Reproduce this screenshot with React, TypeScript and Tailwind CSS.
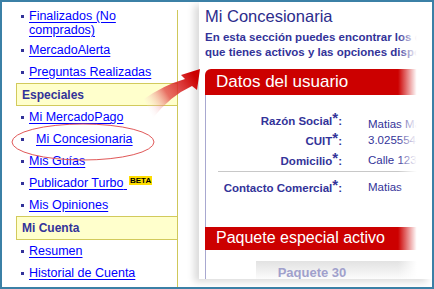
import React from 'react';

const font = "font-['Liberation_Sans',Arial,sans-serif]";

const Bullet = ({ className = '' }: { className?: string }) => (
  <span className={`w-[3px] h-[3px] bg-[#333399] shrink-0 ${className}`} />
);

const Item = ({ label, gap = 'ml-[5px]', beta }: { label: string; gap?: string; beta?: boolean }) => (
  <div className="h-[22px] flex items-center pl-[19px]">
    <Bullet />
    <a className={`${gap} text-[12.5px] leading-[14px] text-[#0000ff] underline underline-offset-2 whitespace-nowrap`}>
      {label}
      {beta && '\u00a0'}
    </a>
    {beta && (
      <span className="ml-[2px] -mt-[6px] bg-[#ffdd00] text-black font-bold text-[8px] leading-[9px] px-[1px]">BETA</span>
    )}
  </div>
);

const Header = ({ label, h }: { label: string; h: string }) => (
  <div className={`${h} ml-[14px] border border-r-0 border-[#d2ca5c] bg-[#ffffcc] flex items-center pl-[5px] text-[12px] font-bold text-[#333399]`}>
    {label}
  </div>
);

const Field = ({ label, value, first }: { label: string; value: string; first?: boolean }) => (
  <div className="flex h-[20px] items-center">
    <div className="w-[136px] text-right text-[11.5px] font-bold text-[#333399] whitespace-nowrap">
      {label}
      <span className="text-[15px] leading-none align-[2px]">*</span>:
    </div>
    <div className={`pl-[26px] text-[11.5px] text-[#333399] whitespace-nowrap ${first ? 'pt-[9px]' : ''}`}>{value}</div>
  </div>
);

export default function App() {
  return (
    <div className={`relative w-[434px] h-[289px] border-2 border-[#3b80a6] bg-white flex overflow-hidden ${font}`}>
      {/* sidebar */}
      <div className="w-[176px] shrink-0 flex flex-col">
        <div className="mt-[8px] flex-1 border-r border-[#cfc85a] flex flex-col">
          <div className="-mt-px h-[30px] flex items-start pl-[19px]">
            <Bullet className="mt-[6px]" />
            <a className="ml-[5px] text-[12.5px] leading-[14px] text-[#0000ff] underline underline-offset-2">
              Finalizados (No
              <br />
              comprados)
            </a>
          </div>
          <Item label="MercadoAlerta" />
          <Item label="Preguntas Realizadas" />
          <Header label="Especiales" h="h-[23px]" />
          <Item label="Mi MercadoPago" />
          <Item label="Mi Concesionaria" gap="ml-[12px]" />
          <Item label="Mis Guías" />
          <Item label="Publicador Turbo" beta />
          <Item label="Mis Opiniones" />
          <Header label="Mi Cuenta" h="h-[24px]" />
          <Item label="Resumen" />
          <Item label="Historial de Cuenta" />
        </div>
      </div>

      {/* main panel */}
      <div className="flex-1 flex flex-col pl-[21px] pb-[8px] min-w-0">
        <div className="relative flex-1 bg-white shadow-[-5px_3px_7px_rgba(0,0,0,0.14)] pl-[6px] flex flex-col overflow-hidden">
          <div className="pt-[5px] text-[16.5px] leading-[19px] text-[#2c2c8c] whitespace-nowrap">Mi Concesionaria</div>
          <div className="mt-[2px] -ml-[2px] h-px bg-[#7070b0]" />
          <div className="mt-[2px] text-[11.5px] leading-[15px] font-bold text-[#333399] whitespace-nowrap">
            En esta sección puedes encontrar los c
            <br />
            que tienes activos y las opciones dispo
          </div>

          <div className="mt-[9px] h-[26px] bg-[#cc0000] rounded-tl-[6px] flex items-center pl-[11px] text-[17px] text-white whitespace-nowrap">
            Datos del usuario
          </div>

          <div className="border-l border-[#a8a8d0] flex flex-col pb-[20px]">
            <div className="pt-[16px]">
              <Field label="Razón Social" value="Matias Ma" first />
              <Field label="CUIT" value="3.0255546" />
              <Field label="Domicilio" value="Calle 1234" />
            </div>
            <div className="ml-[12px] h-px bg-[#c8c8c8]" />
            <div className="mt-[6px]">
              <Field label="Contacto Comercial" value="Matias" />
            </div>
            <div className="h-[9px]" />
          </div>

          <div className="h-[23px] bg-[#cc0000] flex items-center pl-[11px] text-[16px] text-white whitespace-nowrap">
            Paquete especial activo
          </div>

          <div className="border-l border-[#a8a8d0] flex-1 pt-[11px]">
            <div className="ml-[50px] h-[20px] bg-gradient-to-b from-[#e2e2e2] to-white flex justify-center pr-[64px] pt-[2px] text-[13px] font-bold text-[#a0a0cc]">
              Paquete 30
            </div>
          </div>

          <div className="absolute right-0 top-0 bottom-0 w-[34px] bg-gradient-to-r from-transparent via-white via-55% to-white" />
        </div>
      </div>

      {/* arrow and circle */}
      <svg className="absolute -left-[2px] -top-[2px] w-[434px] h-[289px] pointer-events-none" viewBox="0 0 434 289">
        <defs>
          <linearGradient id="arr" x1="146" y1="110" x2="196" y2="78" gradientUnits="userSpaceOnUse">
            <stop offset="0" stopColor="#ffffff" stopOpacity="0" />
            <stop offset="0.45" stopColor="#e04040" stopOpacity="0.75" />
            <stop offset="1" stopColor="#cc0000" />
          </linearGradient>
        </defs>
        <ellipse cx="83" cy="142" rx="71" ry="18" fill="none" stroke="#e05858" strokeWidth="1" />
        <path
          d="M144 99 Q164 85 185 79 L181 75 L200 69 L197 90 L192 86 Q170 96 153 118 Z"
          fill="url(#arr)"
        />
      </svg>
    </div>
  );
}
